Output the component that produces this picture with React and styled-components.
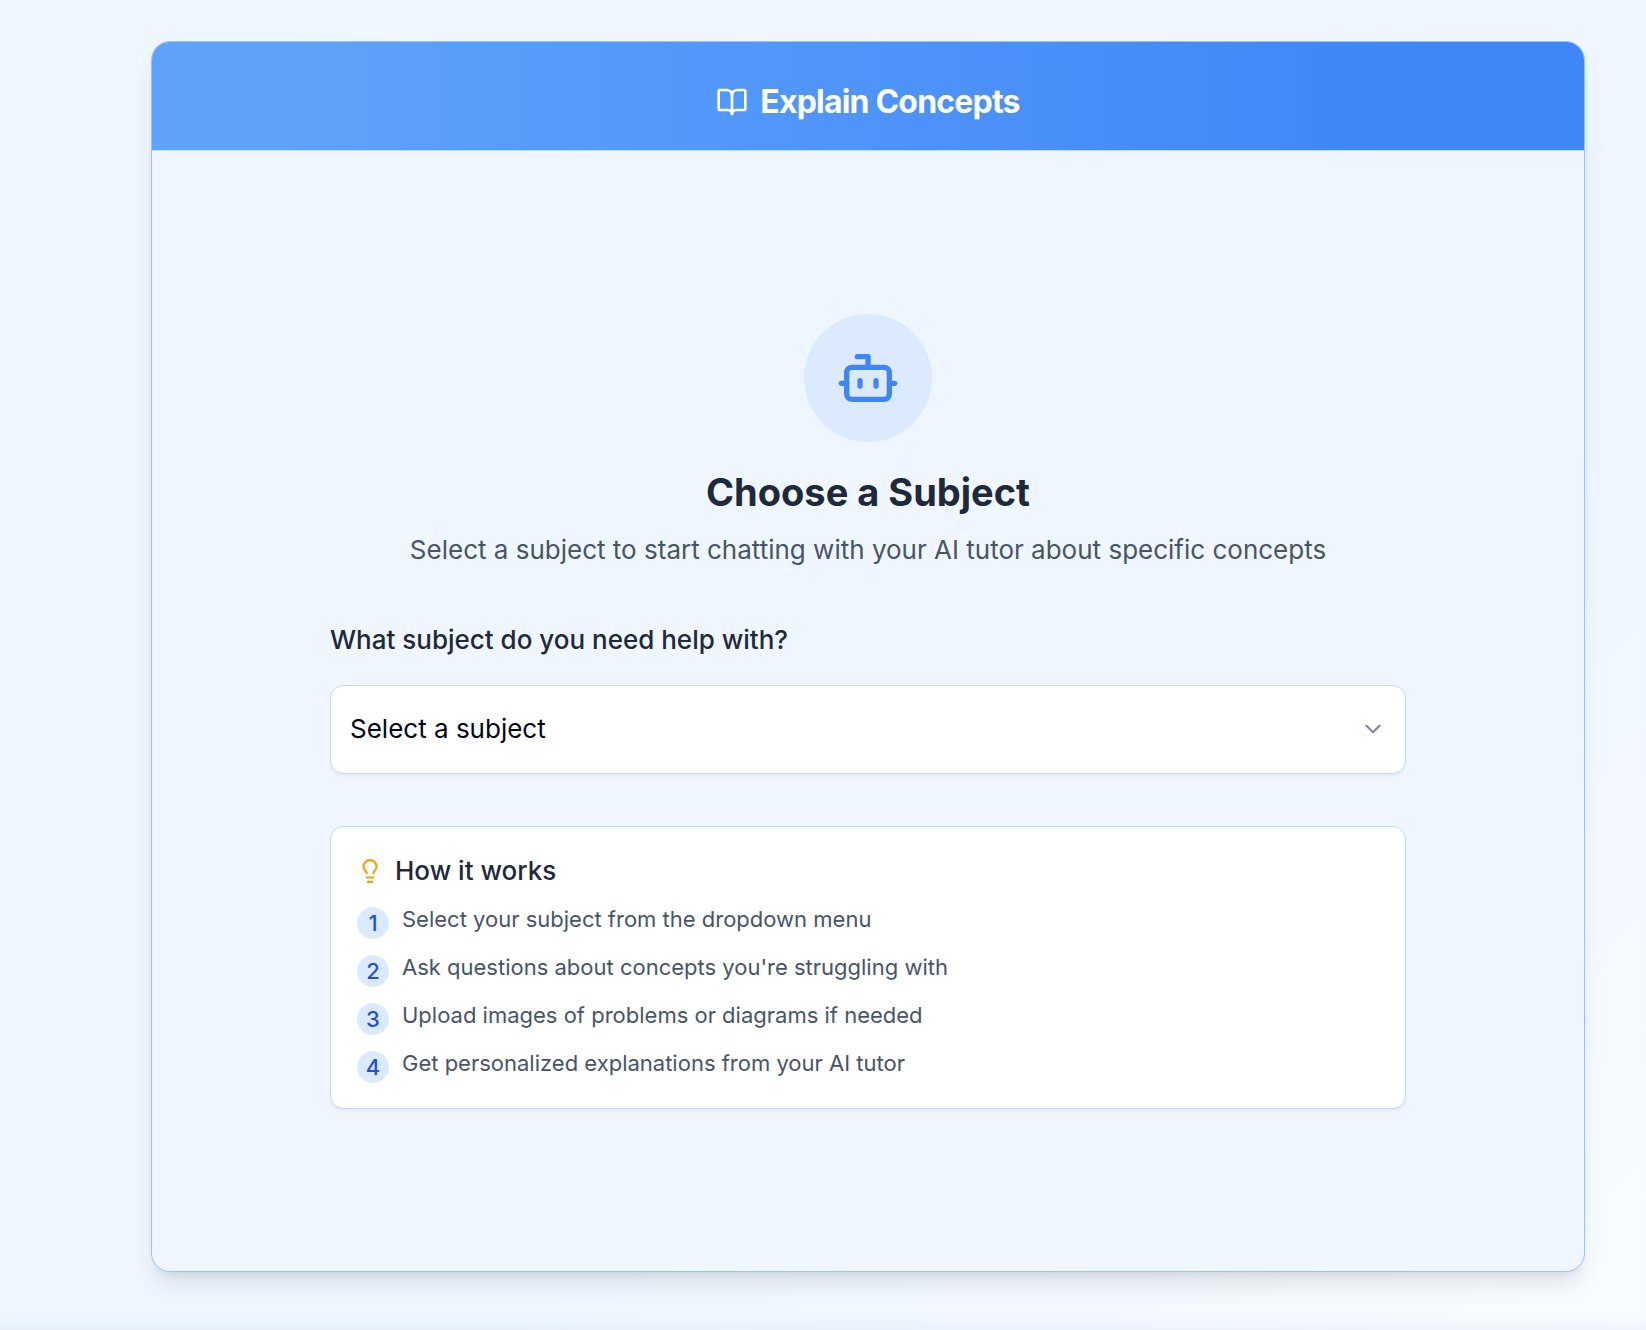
/**
 * Explain Concepts Page
 * Subject picker shown before the tutor chat starts
 */
import React, { useState } from 'react';
import styled, { createGlobalStyle, ThemeProvider } from 'styled-components';
import { BookOpen, Bot, ChevronDown, Lightbulb } from 'lucide-react';

const theme = {
  colors: {
    text: '#1e293b',
    muted: '#475569',
    ink: '#020817',
    icon: '#7f899a',
    primary: '#3f86f7',
    primaryLight: '#5ea2fb',
    primaryDark: '#1d50dc',
    blue50: '#eff6ff',
    blue100: '#dbeafe',
    blue200: '#bfdbfe',
    blue300: '#93c5fd',
    amber: '#f59e0b',
  },
  fontSize: {
    sm: '22px',
    base: '26px',
    lg: '32px',
    xl: '38px',
  },
  radius: {
    md: '13px',
    lg: '19px',
  },
};

const GlobalStyle = createGlobalStyle`
  *, *::before, *::after {
    box-sizing: border-box;
  }

  body {
    margin: 0;
    font-family: Inter, 'Liberation Sans', sans-serif;
    color: ${props => props.theme.colors.text};
    -webkit-font-smoothing: antialiased;
  }

  h1, h2, h3, p, ol {
    margin: 0;
    padding: 0;
  }
`;

const Page = styled.main`
  min-height: 100vh;
  padding: 41px 61px 58px 151px;
  background: linear-gradient(to bottom right, #eff6ff 0%, #eff6ff 65%, #f9fcff 100%);
  box-shadow: inset 0 -16px 16px -12px rgba(100, 130, 180, 0.08);

  @media (max-width: 900px) {
    padding: 24px;
  }
`;

const Card = styled.section`
  overflow: hidden;
  border: 1px solid ${props => props.theme.colors.blue300};
  border-radius: ${props => props.theme.radius.lg};
  background: ${props => props.theme.colors.blue50};
  box-shadow: 0 16px 24px -5px rgba(0, 0, 0, 0.1), 0 6px 10px -6px rgba(0, 0, 0, 0.1);
`;

const CardHeader = styled.header`
  display: flex;
  align-items: center;
  justify-content: center;
  gap: 12px;
  padding: 41px 32px 29px;
  border-bottom: 1px solid ${props => props.theme.colors.blue200};
  background: linear-gradient(
    to right,
    ${props => props.theme.colors.primaryLight} 10%,
    ${props => props.theme.colors.primary} 88%
  );
  color: #fff;
`;

const Title = styled.h1`
  font-size: ${props => props.theme.fontSize.lg};
  line-height: 38px;
  font-weight: 700;
  letter-spacing: -0.025em;
`;

const CardBody = styled.div`
  display: flex;
  align-items: center;
  justify-content: center;
  min-height: 1120px;
  padding: 38px;
`;

const Content = styled.div`
  width: 100%;
  max-width: 1076px;
`;

const Intro = styled.div`
  display: flex;
  flex-direction: column;
  align-items: center;
  margin-bottom: 52px;
  text-align: center;
`;

const BotCircle = styled.div`
  display: flex;
  align-items: center;
  justify-content: center;
  width: 128px;
  height: 128px;
  margin-bottom: 25px;
  border-radius: 50%;
  background: ${props => props.theme.colors.blue100};
  color: ${props => props.theme.colors.primary};
`;

const Heading = styled.h2`
  margin-bottom: 13px;
  font-size: ${props => props.theme.fontSize.xl};
  line-height: 51px;
  font-weight: 700;
`;

const Subtitle = styled.p`
  font-size: ${props => props.theme.fontSize.base};
  line-height: 38px;
  color: ${props => props.theme.colors.muted};
`;

const Field = styled.div`
  display: flex;
  flex-direction: column;
  gap: 26px;
  margin-bottom: 52px;
`;

const Label = styled.label`
  font-size: ${props => props.theme.fontSize.base};
  line-height: 38px;
  font-weight: 500;
`;

const SelectWrapper = styled.div`
  position: relative;

  svg {
    position: absolute;
    top: 50%;
    right: 20px;
    transform: translateY(-50%);
    color: ${props => props.theme.colors.icon};
    pointer-events: none;
  }
`;

const Select = styled.select`
  display: block;
  width: 100%;
  height: 89px;
  padding: 0 64px 2px 19px;
  appearance: none;
  border: 1px solid ${props => props.theme.colors.blue200};
  border-radius: ${props => props.theme.radius.md};
  background: #fff;
  box-shadow: 0 2px 3px rgba(0, 0, 0, 0.05);
  font-family: inherit;
  font-size: ${props => props.theme.fontSize.base};
  color: ${props => props.theme.colors.ink};
  cursor: pointer;

  &:focus-visible {
    outline: 2px solid ${props => props.theme.colors.primary};
  }
`;

const InfoBox = styled.section`
  padding: 25px 26px;
  border: 1px solid ${props => props.theme.colors.blue200};
  border-radius: ${props => props.theme.radius.md};
  background: #fff;
  box-shadow: 0 2px 3px rgba(0, 0, 0, 0.05);
`;

const InfoTitle = styled.h3`
  display: flex;
  align-items: center;
  gap: 12px;
  margin-bottom: 13px;
  font-size: ${props => props.theme.fontSize.base};
  line-height: 38px;
  font-weight: 500;

  svg {
    color: ${props => props.theme.colors.amber};
  }
`;

const StepList = styled.ol`
  display: grid;
  gap: 12px;
  list-style: none;
`;

const Step = styled.li`
  display: flex;
  align-items: flex-start;
  gap: 13px;
  font-size: ${props => props.theme.fontSize.sm};
  line-height: 32px;
  color: ${props => props.theme.colors.muted};
`;

const StepNumber = styled.span`
  flex-shrink: 0;
  width: 32px;
  height: 32px;
  margin-top: 4px;
  border-radius: 50%;
  background: ${props => props.theme.colors.blue100};
  color: ${props => props.theme.colors.primaryDark};
  font-weight: 500;
  text-align: center;
`;

const subjects = ['Mathematics', 'Physics', 'Chemistry', 'Biology', 'History'];

const steps = [
  'Select your subject from the dropdown menu',
  "Ask questions about concepts you're struggling with",
  'Upload images of problems or diagrams if needed',
  'Get personalized explanations from your AI tutor',
];

const App = () => {
  const [subject, setSubject] = useState('');

  return (
    <ThemeProvider theme={theme}>
      <GlobalStyle />
      <Page>
        <Card>
          <CardHeader>
            <BookOpen size={32} />
            <Title>Explain Concepts</Title>
          </CardHeader>

          <CardBody>
            <Content>
              <Intro>
                <BotCircle>
                  <Bot size={64} />
                </BotCircle>
                <Heading>Choose a Subject</Heading>
                <Subtitle>
                  Select a subject to start chatting with your AI tutor about specific concepts
                </Subtitle>
              </Intro>

              <Field>
                <Label htmlFor="subject">What subject do you need help with?</Label>
                <SelectWrapper>
                  <Select
                    id="subject"
                    value={subject}
                    onChange={(e) => setSubject(e.target.value)}
                  >
                    <option value="" disabled hidden>Select a subject</option>
                    {subjects.map((name) => (
                      <option key={name} value={name}>{name}</option>
                    ))}
                  </Select>
                  <ChevronDown size={26} />
                </SelectWrapper>
              </Field>

              <InfoBox>
                <InfoTitle>
                  <Lightbulb size={26} />
                  How it works
                </InfoTitle>
                <StepList>
                  {steps.map((text, index) => (
                    <Step key={text}>
                      <StepNumber>{index + 1}</StepNumber>
                      <span>{text}</span>
                    </Step>
                  ))}
                </StepList>
              </InfoBox>
            </Content>
          </CardBody>
        </Card>
      </Page>
    </ThemeProvider>
  );
};

export default App;
